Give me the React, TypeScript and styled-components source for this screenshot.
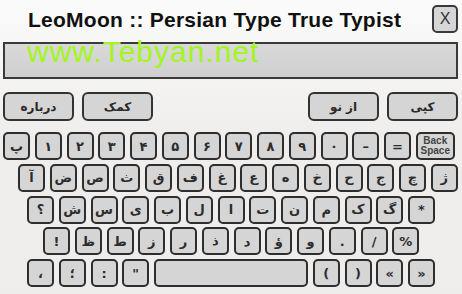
import styled, { createGlobalStyle } from "styled-components";

const GlobalStyle = createGlobalStyle`
  html, body {
    margin: 0;
    padding: 0;
  }
  body {
    width: 462px;
    height: 294px;
    overflow: hidden;
  }
`;

interface KeyDef {
  label: string;
  width?: number;
}

const rows: { indent: number; keys: KeyDef[] }[] = [
  {
    indent: 3,
    keys: [
      { label: "پ" },
      { label: "۱" },
      { label: "۲" },
      { label: "۳" },
      { label: "۴" },
      { label: "۵" },
      { label: "۶" },
      { label: "۷" },
      { label: "۸" },
      { label: "۹" },
      { label: "۰" },
      { label: "–" },
      { label: "=" },
      { label: "backspace", width: 39 },
    ],
  },
  {
    indent: 18,
    keys: ["آ", "ض", "ص", "ث", "ق", "ف", "غ", "ع", "ه", "خ", "ح", "ج", "چ", "ژ"].map((label) => ({ label })),
  },
  {
    indent: 27,
    keys: ["؟", "ش", "س", "ی", "ب", "ل", "ا", "ت", "ن", "م", "ک", "گ", "*"].map((label) => ({ label })),
  },
  {
    indent: 43,
    keys: ["!", "ظ", "ط", "ز", "ر", "ذ", "د", "ؤ", "و", ".", "/", "%"].map((label) => ({ label })),
  },
  {
    indent: 27,
    keys: [
      { label: "،" },
      { label: "؛" },
      { label: ":" },
      { label: '"' },
      { label: "", width: 154 },
      { label: "(" },
      { label: ")" },
      { label: "«" },
      { label: "»" },
    ],
  },
];

export default function App() {
  return (
    <Page>
      <GlobalStyle />
      <Header>
        <Title>LeoMoon :: Persian Type True Typist</Title>
        <CloseButton>X</CloseButton>
      </Header>
      <Field>
        <Watermark>www.Tebyan.net</Watermark>
      </Field>
      <ButtonBar>
        <ButtonGroup>
          <ActionButton>درباره</ActionButton>
          <ActionButton>کمک</ActionButton>
        </ButtonGroup>
        <ButtonGroup>
          <ActionButton>از نو</ActionButton>
          <ActionButton>کپی</ActionButton>
        </ButtonGroup>
      </ButtonBar>
      <Keyboard>
        {rows.map((row, i) => (
          <KeyRow key={i} $indent={row.indent}>
            {row.keys.map((k, j) => (
              <Key key={j} $width={k.width ?? 27}>
                {k.label === "backspace" ? (
                  <BackLabel>
                    Back
                    <br />
                    Space
                  </BackLabel>
                ) : (
                  k.label
                )}
              </Key>
            ))}
          </KeyRow>
        ))}
      </Keyboard>
    </Page>
  );
}

const Page = styled.div`
  width: 462px;
  height: 294px;
  box-sizing: border-box;
  display: flex;
  flex-direction: column;
  background: linear-gradient(#fbfbfb, #efeeec 45%, #eeedeb);
  font-family: "Liberation Sans", Arial, sans-serif;
`;

const Header = styled.div`
  display: flex;
  align-items: center;
  height: 28px;
  margin-top: 5px;
  padding-right: 4px;
`;

const Title = styled.div`
  flex: 1;
  padding-left: 28px;
  padding-top: 1px;
  font-size: 21px;
  letter-spacing: 0.25px;
  font-weight: bold;
  color: #111;
  line-height: 28px;
  white-space: nowrap;
`;

const CloseButton = styled.div`
  width: 26px;
  height: 28px;
  box-sizing: border-box;
  display: flex;
  align-items: center;
  justify-content: center;
  border: 2px solid #3a3a3a;
  border-radius: 5px;
  background: #d6d6d6;
  color: #333;
  font-size: 16px;
`;

const Field = styled.div`
  position: relative;
  margin: 9px 4px 0 3px;
  height: 37px;
  box-sizing: border-box;
  border: 2px solid #3a3a3a;
  background: linear-gradient(#d9d9d9, #cfcfcf);
`;

const Watermark = styled.div`
  position: absolute;
  left: 22px;
  top: -7px;
  font-size: 30px;
  line-height: 30px;
  letter-spacing: 1px;
  color: #a2f51e;
  white-space: nowrap;
`;

const ButtonBar = styled.div`
  display: flex;
  justify-content: space-between;
  margin-top: 13px;
  padding: 0 4px 0 3px;
`;

const ButtonGroup = styled.div`
  display: flex;
  gap: 8px;
`;

const ActionButton = styled.div`
  width: 71px;
  height: 29px;
  box-sizing: border-box;
  display: flex;
  align-items: center;
  justify-content: center;
  border: 2px solid #333;
  border-radius: 6px;
  background: #d5d5d5;
  color: #2a2a2a;
  font-family: "DejaVu Sans", sans-serif;
  font-weight: bold;
  font-size: 12px;
`;

const Keyboard = styled.div`
  display: flex;
  flex-direction: column;
  gap: 3.75px;
  margin-top: 11px;
`;

const KeyRow = styled.div<{ $indent: number }>`
  display: flex;
  gap: 4.75px;
  height: 28px;
  padding-left: ${(p) => p.$indent}px;
`;

const Key = styled.div<{ $width: number }>`
  width: ${(p) => p.$width}px;
  height: 28px;
  box-sizing: border-box;
  display: flex;
  align-items: center;
  justify-content: center;
  border: 2px solid #2e2e2e;
  border-radius: 5px;
  background: #d5d5d5;
  color: #2c2c2c;
  font-family: "DejaVu Sans", sans-serif;
  font-size: 13px;
  font-weight: bold;
`;

const BackLabel = styled.div`
  font-family: "Liberation Sans", Arial, sans-serif;
  font-size: 10px;
  font-weight: bold;
  line-height: 10px;
  color: #444;
  text-align: center;
`;
